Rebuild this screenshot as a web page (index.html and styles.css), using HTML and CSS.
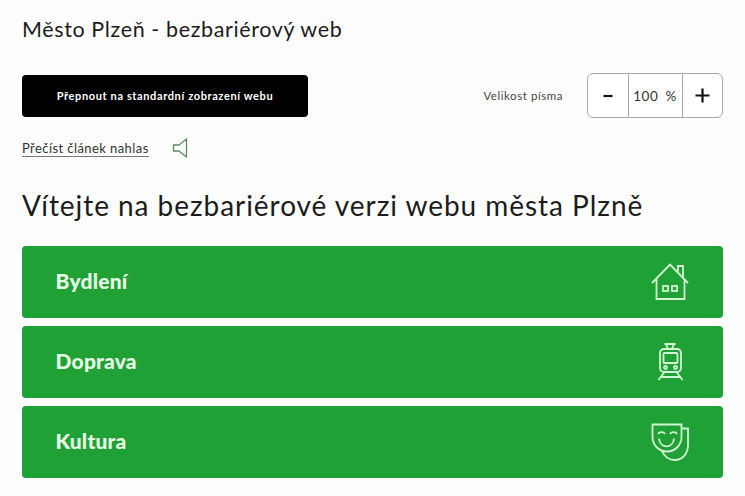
FILE: index.html
```html
<!DOCTYPE html>
<html lang="cs">
<head>
<meta charset="utf-8">
<title>Město Plzeň - bezbariérový web</title>
<link rel="stylesheet" href="styles.css">
</head>
<body>
<div class="page">
  <header class="site-title">Město Plzeň - bezbariérový web</header>
  <div class="toolbar">
    <a class="switch-btn">Přepnout na standardní zobrazení webu</a>
    <div class="font-size">
      <span class="font-label">Velikost písma</span>
      <div class="stepper">
        <span class="step step-btn">
          <svg width="12" height="12" viewBox="0 0 12 12"><path d="M1.500 6h9" stroke="#111" stroke-width="2.200"/></svg>
        </span>
        <span class="step step-value"><span>100</span><span>%</span></span>
        <span class="step step-btn">
          <svg width="15" height="15" viewBox="0 0 15 15"><path d="M0.500 7.500h14M7.500 0.500v14" stroke="#111" stroke-width="2.200"/></svg>
        </span>
      </div>
    </div>
  </div>
  <div class="read-row">
    <a class="read-link">Přečíst článek nahlas</a>
    <svg class="speaker" width="16" height="20" viewBox="0 0 16 20"><path d="M14.500 1 L7 7 H1.500 V13 H7 L14.500 19 Z" fill="none" stroke="#5f8a60" stroke-width="1.300" stroke-linejoin="round"/></svg>
  </div>
  <h1 class="welcome">Vítejte na bezbariérové verzi webu města Plzně</h1>
  <nav class="cards">
    <a class="card">
      <span class="card-label">Bydlení</span>
      <svg class="card-icon" width="38" height="38" viewBox="0 0 38 38" fill="none" stroke="#d2f5d2" stroke-width="1.800">
        <path d="M1 20 L19 1.500 L37 20"/>
        <path d="M5.500 16 V36 H33.500 V16"/>
        <path d="M27 8.500 V3 H32 V14.500"/>
        <rect x="12" y="23" width="5" height="5"/>
        <rect x="21" y="23" width="5" height="5"/>
      </svg>
    </a>
    <a class="card">
      <span class="card-label">Doprava</span>
      <svg class="card-icon" width="38" height="38" viewBox="0 0 38 38" fill="none" stroke="#d2f5d2" stroke-width="1.800">
        <path d="M13.500 1 H24.500 M15 1 L17 6 M23 1 L21 6"/>
        <rect x="9" y="6" width="21" height="23" rx="4"/>
        <rect x="12.500" y="10" width="14" height="10" rx="1"/>
        <circle cx="14.500" cy="24.500" r="1.500"/>
        <circle cx="24.500" cy="24.500" r="1.500"/>
        <path d="M13.500 29 L7.500 37 M25.500 29 L31.500 37 M9.500 34 H29.500"/>
      </svg>
    </a>
    <a class="card">
      <span class="card-label">Kultura</span>
      <svg class="card-icon" width="38" height="38" viewBox="0 0 38 38" fill="none" stroke="#d2f5d2" stroke-width="1.800">
        <path d="M1.500 1.500 H30.500 V14 C30.500 22 24 28.500 16 28.500 C8 28.500 1.500 22 1.500 14 Z"/>
        <path d="M30.500 5.500 H37 V22 C37 31 31 37 24 37 C18 37 13.500 34 11 28"/>
        <path d="M7 11 C8.500 8.500 12.500 8.500 14 11 M19 11 C20.500 8.500 24.500 8.500 26 11"/>
        <path d="M8 15.500 C9 26 22 26 23 15.500"/>
      </svg>
    </a>
  </nav>
</div>
</body>
</html>
```

FILE: styles.css
```css
* { box-sizing: border-box; }
html, body { margin: 0; padding: 0; background: #fdfdfd; }
body {
  font-family: "Lato", "Liberation Sans", sans-serif;
  color: #1c1c1c;
  overflow: hidden;
}
.page {
  width: 745px;
  height: 496px;
  padding: 16px 22px 0;
  display: flex;
  flex-direction: column;
}
.site-title {
  font-size: 21.5px;
  line-height: 26px;
  letter-spacing: 0.62px;
}
.toolbar {
  margin-top: 31px;
  height: 45px;
  display: flex;
  align-items: center;
  justify-content: space-between;
}
.switch-btn {
  width: 286px;
  height: 42px;
  background: #000;
  color: #fff;
  border-radius: 4px;
  font-size: 11px;
  font-weight: 700;
  letter-spacing: 0.62px;
  display: flex;
  align-items: center;
  justify-content: center;
}
.font-size {
  display: flex;
  align-items: center;
  gap: 24px;
}
.font-label {
  font-size: 11.5px;
  letter-spacing: 0.55px;
  color: #444;
}
.stepper {
  width: 136px;
  height: 45px;
  display: flex;
  border: 1px solid #a9a9a9;
  border-radius: 6px;
  background: #fff;
}
.step {
  display: flex;
  align-items: center;
  justify-content: center;
}
.step-btn { flex: 1; }
.step-value {
  width: 55px;
  flex: none;
  gap: 7px;
  border-left: 1px solid #a9a9a9;
  border-right: 1px solid #a9a9a9;
  font-size: 13.5px;
  letter-spacing: 0.6px;
  color: #333;
}
.read-row {
  margin-top: 18px;
  display: flex;
  align-items: center;
  gap: 23px;
  height: 24px;
}
.read-link {
  font-size: 13px;
  line-height: 16px;
  letter-spacing: 0.42px;
  color: #333;
  border-bottom: 1px solid #777;
}
.welcome {
  margin: 28px 0 0;
  font-size: 28px;
  line-height: 34px;
  font-weight: 400;
  letter-spacing: 0.95px;
}
.cards {
  margin-top: 24px;
  display: flex;
  flex-direction: column;
  gap: 8px;
}
.card {
  height: 72px;
  background: #20a135;
  border-radius: 4px;
  padding: 0 34px 0 33.5px;
  display: flex;
  align-items: center;
  justify-content: space-between;
  color: #e6fbe6;
}
.card-label {
  font-size: 21px;
  font-weight: 900;
  letter-spacing: 0.2px;
  padding-bottom: 3px;
}
.card-icon { flex: none; }
```
